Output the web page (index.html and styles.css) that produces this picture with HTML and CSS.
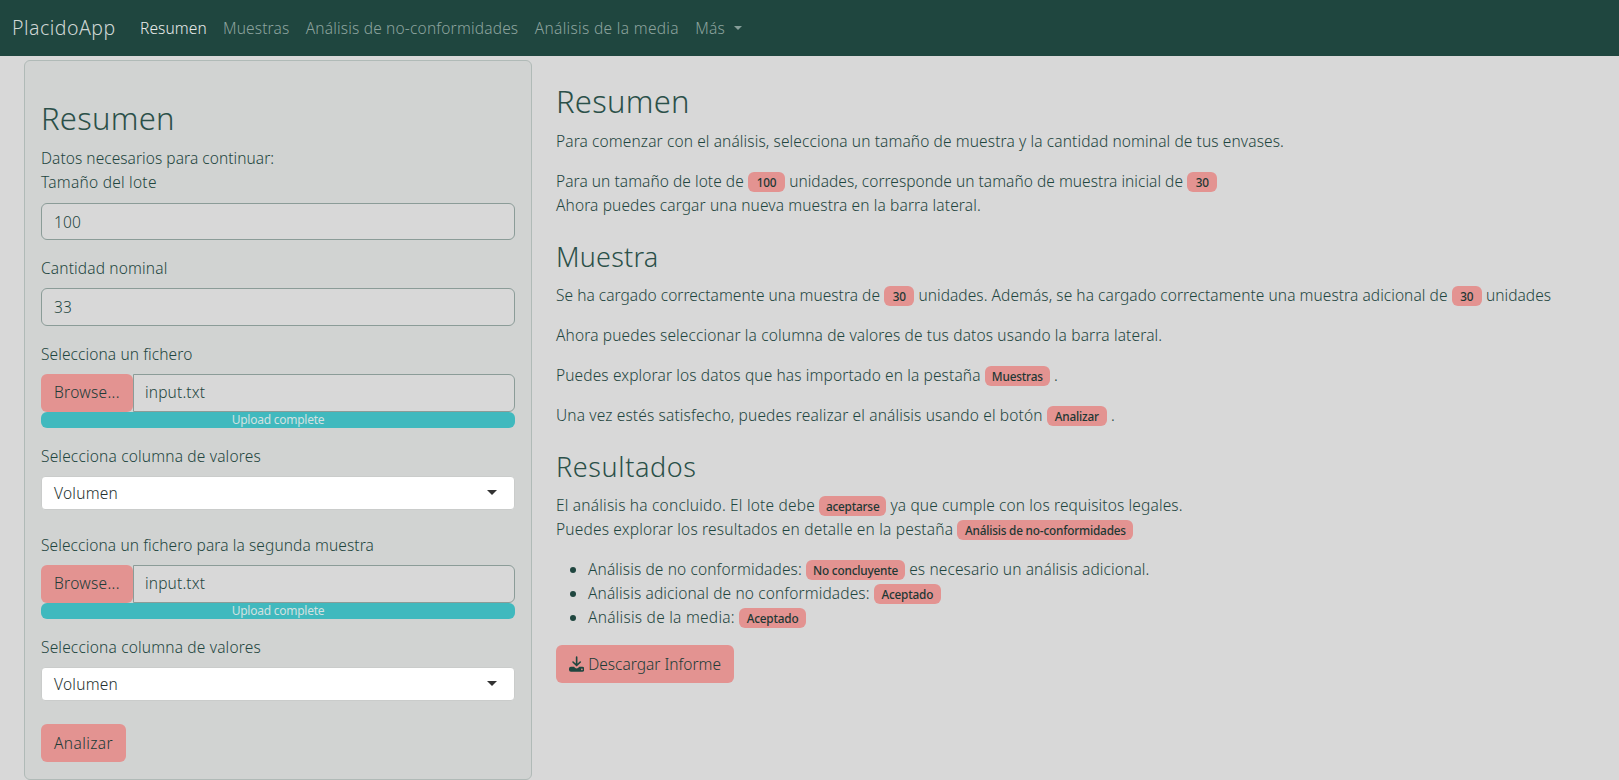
FILE: index.html
```
<!DOCTYPE html>
<html lang="es">
<head>
<meta charset="utf-8">
<title>PlacidoApp</title>
<link rel="stylesheet" href="styles.css">
</head>
<body>
<nav class="navbar">
  <a class="brand">PlacidoApp</a>
  <ul class="nav">
    <li class="active s10">Resumen</li>
    <li class="s12">Muestras</li>
    <li class="s18">Análisis de no-conformidades</li>
    <li class="s32">Análisis de la media</li>
    <li class="dropdown s12">Más<span class="caret"></span></li>
  </ul>
</nav>
<div class="layout">
  <form class="sidebar">
    <h2>Resumen</h2>
    <div class="s5">Datos necesarios para continuar:</div>
    <div class="group first">
      <label class="s24">Tamaño del lote</label>
      <div class="input">100</div>
    </div>
    <div class="group">
      <label>Cantidad nominal</label>
      <div class="input">33</div>
    </div>
    <div class="group">
      <label class="s10">Selecciona un fichero</label>
      <div class="file"><span class="browse">Browse...</span><span class="filename">input.txt</span></div>
      <div class="progress">Upload complete</div>
    </div>
    <div class="group select-group">
      <label class="s17">Selecciona columna de valores</label>
      <div class="select">Volumen<span class="arrow"></span></div>
    </div>
    <div class="group">
      <label class="s10">Selecciona un fichero para la segunda muestra</label>
      <div class="file"><span class="browse">Browse...</span><span class="filename">input.txt</span></div>
      <div class="progress">Upload complete</div>
    </div>
    <div class="group select-group">
      <label class="s17">Selecciona columna de valores</label>
      <div class="select">Volumen<span class="arrow"></span></div>
    </div>
    <span class="btn analyze">Analizar</span>
  </form>
  <main class="main">
    <h2>Resumen</h2>
    <p class="s11">Para comenzar con el análisis, selecciona un tamaño de muestra y la cantidad nominal de tus envases.</p>
    <p><span class="s5">Para un tamaño de lote de</span> <b class="badge w37">100</b> <span class="s3">unidades, corresponde un tamaño de muestra inicial de</span> <b class="badge w30">30</b><br>
    <span class="s12">Ahora puedes cargar una nueva muestra en la barra lateral.</span></p>
    <h3>Muestra</h3>
    <p><span class="s3">Se ha cargado correctamente una muestra de</span> <b class="badge w30">30</b> <span class="s6">unidades. Además, se ha cargado correctamente una muestra adicional de</span> <b class="badge w30">30</b> <span class="s6">unidades</span></p>
    <p class="s14">Ahora puedes seleccionar la columna de valores de tus datos usando la barra lateral.</p>
    <p><span class="s12">Puedes explorar los datos que has importado en la pestaña</span> <b class="badge w65">Muestras</b> .</p>
    <p><span class="s14">Una vez estés satisfecho, puedes realizar el análisis usando el botón</span> <b class="badge w60">Analizar</b> .</p>
    <h3 class="results">Resultados</h3>
    <p><span class="s20">El análisis ha concluido. El lote debe</span> <b class="badge w67">aceptarse</b> <span class="s14">ya que cumple con los requisitos legales.</span><br>
    <span class="s18">Puedes explorar los resultados en detalle en la pestaña</span> <b class="badge w176">Análisis de no-conformidades</b></p>
    <ul class="findings">
      <li class="s12">Análisis de no conformidades: <b class="badge w99">No concluyente</b> es necesario un análisis adicional.</li>
      <li class="s12">Análisis adicional de no conformidades: <b class="badge w67">Aceptado</b></li>
      <li><span class="s24">Análisis de la media:</span> <b class="badge w67">Aceptado</b></li>
    </ul>
    <span class="btn download"><svg viewBox="0 0 16 16" width="16" height="16"><path d="M8 0.8v8.2M4.2 5.9 8 9.6l3.8-3.7" fill="none" stroke="#1f463f" stroke-width="1.7" stroke-linecap="round" stroke-linejoin="round"/><path fill-rule="evenodd" fill="#1f463f" d="M2 11h3.2l1.4 1.2q1.4 1 2.8 0L10.800 11H14q2 0 2 2v1q0 2-2 2H2q-2 0-2-2v-1q0-2 2-2zm11.500 1.700a.8.8 0 1 0 .01 0z"/></svg>Descargar Informe</span>
  </main>
</div>
</body>
</html>
```
FILE: styles.css
```
* { box-sizing: border-box; }
html, body { height: 100%; }
body {
  margin: 0;
  overflow: hidden;
  background: #d8d8d8;
  color: #1f463f;
  font-family: "Noto Sans", "Open Sans", sans-serif;
  font-size: 15.5px;
  font-weight: 300;
  line-height: 24px;
  letter-spacing: 0.15px;
}
h2, h3, p, ul { margin: 0; padding: 0; }
h2, h3 { color: #2b5049; font-weight: 300; }
h2 { font-size: 31px; line-height: 38px; letter-spacing: 0.25px; }
h3 { font-size: 27px; line-height: 34px; letter-spacing: 0.2px; }

.s3 { letter-spacing: 0.03px; }
.s5 { letter-spacing: 0.05px; }
.s6 { letter-spacing: 0.06px; }
.s10 { letter-spacing: 0.1px; }
.s11 { letter-spacing: 0.11px; }
.s12 { letter-spacing: 0.12px; }
.s14 { letter-spacing: 0.14px; }
.s17 { letter-spacing: 0.17px; }
.s18 { letter-spacing: 0.18px; }
.s20 { letter-spacing: 0.2px; }
.s24 { letter-spacing: 0.25px; }
.s32 { letter-spacing: 0.32px; }

.navbar {
  display: flex;
  align-items: center;
  height: 56px;
  padding: 0 12px 1px;
  background: #1f463f;
  color: #8ca39e;
}
.brand { width: 128px; color: #cfd7d5; font-size: 19.5px; letter-spacing: 0.5px; }
.nav { display: flex; gap: 16.4px; list-style: none; }
.nav .active { color: #e8ebea; }
.caret, .arrow { display: inline-block; border: 4.5px solid transparent; border-bottom: 0; }
.caret { margin-left: 9px; border-top-color: #869e99; vertical-align: 4px; }

.layout { display: flex; gap: 24px; padding: 4px 24px 0; }
.sidebar {
  flex: none;
  width: 508px;
  height: 720px;
  padding: 38px 16px 0;
  background: #d1d3d2;
  border: 1px solid #b0bab7;
  border-radius: 6px;
}
.sidebar h2 { margin-bottom: 9px; }
.group { margin-bottom: 16px; }
.group label { display: block; margin-bottom: 8px; }
.first label { margin-bottom: 8.5px; }
.group .input, .file { height: 37.9px; }
.input {
  padding: 6px 12px;
  background: #d8d8d8;
  border: 1px solid #8b9c98;
  border-radius: 6px;
}
.file { display: flex; }
.browse, .btn { background: #e39391; border-radius: 6px; color: #203b37; }
.browse { width: 92px; padding: 6px 0 0 13px; letter-spacing: 0.3px; }
.filename {
  flex: 1;
  padding: 5px 11px;
  background: #d8d8d8;
  border: 1px solid #8b9c98;
  border-radius: 0 6px 6px 0;
}
.progress {
  height: 16px;
  border-radius: 6px;
  background: #40b9be;
  color: #d3e1e1;
  font-size: 12px;
  font-weight: 400;
  line-height: 16px;
  letter-spacing: -0.25px;
  text-align: center;
}
.select-group { margin-bottom: 23px; }
.select {
  display: flex;
  align-items: center;
  justify-content: space-between;
  height: 34px;
  padding: 0 17px 1px 12px;
  background: #fff;
  border: 1px solid #cacccb;
  border-radius: 4px;
  color: #24302e;
  letter-spacing: 0.25px;
}
.arrow { border-width: 5px; border-bottom: 0; border-top-color: #333; }
.btn { display: inline-flex; align-items: center; height: 38px; padding: 0 13px 1px; }
.analyze { width: 85px; letter-spacing: 0.4px; }

.main { flex: 1; padding-top: 22px; white-space: nowrap; }
.main h2 { margin-bottom: 9px; }
.main p { margin-bottom: 16px; }
.main h3 { margin: 23px 0 9px; }
.main .results { margin-top: 23px; letter-spacing: 0.6px; }
.badge {
  display: inline-block;
  height: 20px;
  margin-bottom: -2px;
  padding-top: 4px;
  border-radius: 6px;
  background: #e39391;
  color: #1d3834;
  font-size: 11.8px;
  font-weight: 500;
  line-height: 12px;
  letter-spacing: -0.2px;
  text-align: center;
}
.w30 { width: 30px; }
.w37 { width: 37px; }
.w60 { width: 60px; }
.w65 { width: 65px; }
.w67 { width: 67px; }
.w99 { width: 99px; }
.w176 { width: 176px; }
.findings { padding-left: 32px; }
.download { width: 178px; margin-top: 16px; gap: 4px; letter-spacing: 0; }
```
